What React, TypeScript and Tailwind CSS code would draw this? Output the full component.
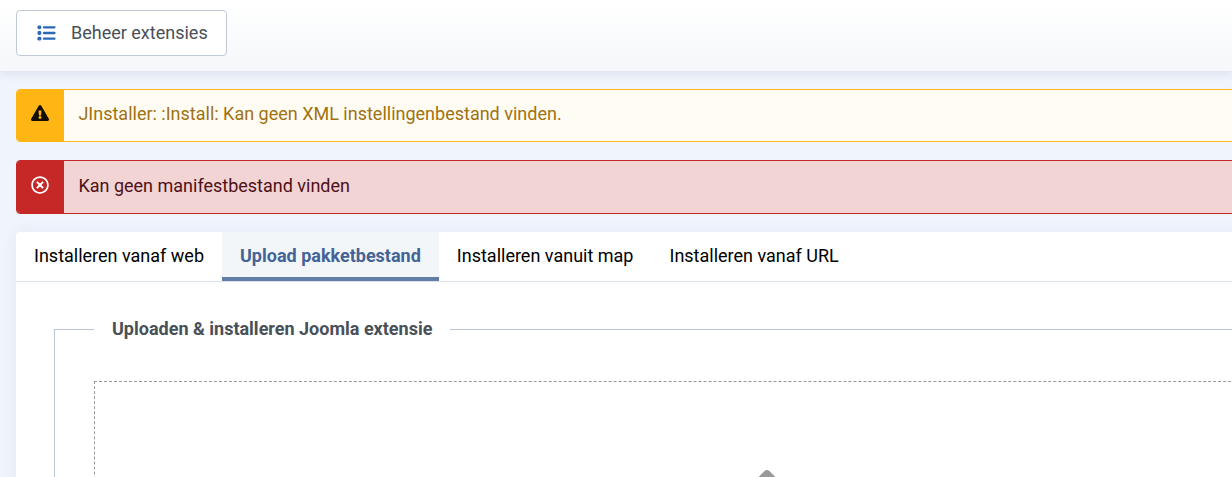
import type { ReactNode } from "react";
import { FaExclamationTriangle, FaRegTimesCircle, FaUpload } from "react-icons/fa";

type AlertType = "warning" | "danger";

const alertStyles: Record<AlertType, { box: string; icon: string; text: string }> = {
  warning: {
    box: "h-[53px] border-[#ffb514] bg-[#fffcf4]",
    icon: "bg-[#ffb514] pt-[13.5px] text-[#140e00]",
    text: "pt-[10px] text-[#a07210]",
  },
  danger: {
    box: "h-[54px] border-[#c52827] bg-[#f2d4d4]",
    icon: "bg-[#c52827] pt-[15px] text-white",
    text: "pt-[11px] text-[#4f1016]",
  },
};

const tabs = [
  "Installeren vanaf web",
  "Upload pakketbestand",
  "Installeren vanuit map",
  "Installeren vanaf URL",
];

function ListIcon() {
  return (
    <svg className="h-4 w-[19px] text-[#2a69b8]" viewBox="0 0 19 16" fill="currentColor">
      {[2.3, 8, 13.7].map((y) => (
        <g key={y}>
          <rect x="0.5" y={y - 1.9} width="3.8" height="3.8" rx="1.4" />
          <rect x="5.8" y={y - 1.15} width="12.8" height="2.3" rx="1.1" />
        </g>
      ))}
    </svg>
  );
}

function Alert({ type, icon, children }: { type: AlertType; icon: ReactNode; children: ReactNode }) {
  const styles = alertStyles[type];

  return (
    <div className={`flex overflow-hidden rounded border ${styles.box}`} role="alert">
      <div className={`-ml-px flex w-12 shrink-0 justify-center ${styles.icon}`}>{icon}</div>
      <p className={`pl-[14.4px] leading-[27px] ${styles.text}`}>{children}</p>
    </div>
  );
}

export default function App() {
  const activeTab = "Upload pakketbestand";

  return (
    <div className="h-[477px] overflow-hidden bg-[#f0f4fb] font-['Roboto',sans-serif] text-lg">
      {/* Toolbar */}
      <header className="relative h-[71px] bg-gradient-to-b from-white to-[#f5f7fa] px-4 pt-[10px] shadow-[0_2px_10px_rgba(31,80,130,0.12)]">
        <button className="flex h-[46px] w-[211px] items-center rounded border border-[#c1c9d9] bg-white pl-5 text-[#495057]">
          <ListIcon />
          <span className="ml-[15px]">Beheer extensies</span>
        </button>
      </header>

      {/* The content is wider than the window and runs off its right edge */}
      <main className="w-[1535px] px-4 pt-[18px]">
        <div className="mb-[18px] flex flex-col gap-[18px]">
          <Alert type="warning" icon={<FaExclamationTriangle className="h-[18px] w-[18px]" />}>
            JInstaller: :Install: Kan geen XML instellingenbestand vinden.
          </Alert>
          <Alert type="danger" icon={<FaRegTimesCircle className="h-[18px] w-[18px]" />}>
            Kan geen manifestbestand vinden
          </Alert>
        </div>

        <section className="h-[500px] rounded bg-white shadow-[0_1px_15px_rgba(40,70,150,0.07)]">
          <div className="flex h-[50px] border-b border-[#dbe2ee]" role="tablist">
            {tabs.map((tab) => (
              <button
                key={tab}
                role="tab"
                aria-selected={tab === activeTab}
                className={`h-[49px] px-[18px] pb-0.5 leading-[27px] first:rounded-tl ${
                  tab === activeTab
                    ? "bg-[#f2f6f9] font-bold text-[#446396] shadow-[inset_0_-4px_0_#607da6]"
                    : "text-black"
                }`}
              >
                {tab}
              </button>
            ))}
          </div>

          <fieldset className="mx-[38px] mt-[34px] h-[420px] border border-[#b8c6dc] px-[39px]">
            <legend className="px-[18px] pb-0.5 font-bold leading-[25px] text-[#495057]">
              Uploaden &amp; installeren Joomla extensie
            </legend>
            <div className="mt-[38px] flex h-[300px] justify-center border border-dashed border-[#999] pt-[88px]">
              <FaUpload className="mr-px h-[90px] w-[90px] text-[#999]" />
            </div>
          </fieldset>
        </section>
      </main>
    </div>
  );
}
